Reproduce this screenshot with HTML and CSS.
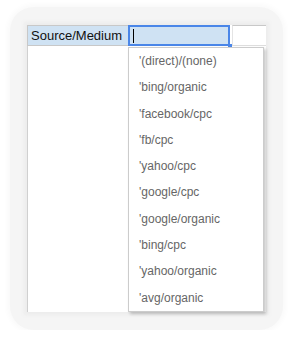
FILE: index.html
```html
<!DOCTYPE html>
<html>
<head>
<meta charset="utf-8">
<link rel="stylesheet" href="styles.css">
</head>
<body>
<div class="frame">
  <div class="sheet">
    <div class="header-row">
      <div class="cell label">Source/Medium</div>
      <div class="cell editor"><span class="caret"></span><span class="handle"></span></div>
      <div class="cell rest"></div>
    </div>
    <div class="body-area"></div>
    <ul class="dropdown">
      <li>'(direct)/(none)</li>
      <li>'bing/organic</li>
      <li>'facebook/cpc</li>
      <li>'fb/cpc</li>
      <li>'yahoo/cpc</li>
      <li>'google/cpc</li>
      <li>'google/organic</li>
      <li>'bing/cpc</li>
      <li>'yahoo/organic</li>
      <li>'avg/organic</li>
    </ul>
  </div>
</div>
</body>
</html>
```
FILE: styles.css
```css
html, body {
  margin: 0;
  padding: 0;
  background: #ffffff;
  font-family: "Liberation Sans", Arial, sans-serif;
}
.frame {
  margin: 7px 0 0 10px;
  width: 239px;
  padding: 18px 17px;
  border-radius: 24px;
  background: #f5f5f5;
  box-shadow: 0 0 5px 3px #fafafa;
}
.sheet {
  position: relative;
  width: 239px;
  height: 287px;
  background: #ffffff;
  box-shadow: 0 0 4px 3px #ececec;
  display: flex;
  flex-direction: column;
}
.header-row {
  display: flex;
  height: 21px;
}
.cell {
  box-sizing: border-box;
  height: 21px;
}
.label {
  width: 101px;
  background: #cfe2f3;
  border-top: 1px solid #c8c8c8;
  border-left: 1px solid #c8c8c8;
  border-bottom: 1px solid #c8c8c8;
  padding-left: 3px;
  font-size: 13px;
  line-height: 20px;
  color: #111;
}
.editor {
  position: relative;
  width: 102px;
  background: #cfe2f3;
  border: 2px solid #4a86e8;
}
.caret {
  position: absolute;
  left: 3px;
  top: 2px;
  width: 1px;
  height: 14px;
  background: #000;
}
.handle {
  position: absolute;
  right: -4px;
  bottom: -4px;
  width: 4px;
  height: 4px;
  background: #4a86e8;
}
.rest {
  flex: 1;
  border-top: 1px solid #c8c8c8;
  border-bottom: 1px solid #dddddd;
  border-left: 1px solid #e4e4e4;
  margin-left: 2px;
}
.body-area {
  flex: 1;
  border-left: 1px solid #d0d0d0;
}
.dropdown {
  position: absolute;
  left: 101px;
  top: 22px;
  width: 134px;
  margin: 0;
  padding: 0;
  list-style: none;
  background: #ffffff;
  border: 1px solid #cccccc;
  box-shadow: 2px 2px 3px rgba(0, 0, 0, 0.22);
}
.dropdown li {
  height: 26.3px;
  line-height: 26px;
  padding-left: 10px;
  font-size: 12px;
  color: #666666;
  white-space: nowrap;
}
```
